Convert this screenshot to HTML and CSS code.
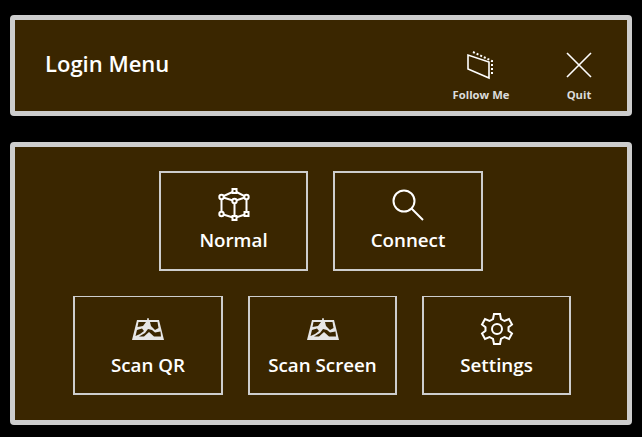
FILE: index.html
```html
<!DOCTYPE html>
<html lang="en">
<head>
  <meta charset="UTF-8" />
  <title>Login Menu</title>
  <link rel="stylesheet" href="styles.css">
</head>
<body>

  <header class="panel top-bar">
    <h1 class="title">Login Menu</h1>
    <div class="top-actions">
      <div class="top-action follow">
        <svg class="top-icon" width="32" height="32" viewBox="0 0 32 32">
          <path class="line" d="M3 5 L3 19 L24 28 L24 12 Z"/>
          <path class="dots" d="M8 2 L27 11 L27 26"/>
        </svg>
        <span class="top-label">Follow Me</span>
      </div>
      <div class="top-action quit">
        <svg class="top-icon" width="32" height="32" viewBox="0 0 32 32">
          <path class="line" d="M4 3 L28 27 M28 3 L4 27"/>
        </svg>
        <span class="top-label">Quit</span>
      </div>
    </div>
  </header>

  <main class="panel menu">
    <div class="menu-row">
      <button class="menu-btn" type="button">
        <svg class="menu-icon" width="34" height="34" viewBox="0 0 34 34">
          <path class="line thick" d="M17.5 3 L29.5 9 L29.5 26 L17.5 30 L4.5 26 L4.5 9 Z M4.5 9 L17.5 13 L29.5 9 M17.5 13 L17.5 30"/>
          <g class="nodes">
            <rect x="15.5" y="1" width="4" height="4"/>
            <circle cx="4.5" cy="9" r="2.2"/>
            <circle cx="29.5" cy="9" r="2.2"/>
            <circle cx="17.5" cy="13" r="2.2"/>
            <circle cx="4.5" cy="26" r="2.2"/>
            <rect x="27.5" y="24" width="4" height="4"/>
            <rect x="15.5" y="28" width="4" height="4"/>
          </g>
        </svg>
        <span>Normal</span>
      </button>
      <button class="menu-btn wide" type="button">
        <svg class="menu-icon" width="34" height="34" viewBox="0 0 34 34">
          <circle class="line thick" cx="13" cy="13" r="10.5"/>
          <path class="line thick" d="M20.5 20.5 L32 32"/>
        </svg>
        <span>Connect</span>
      </button>
    </div>
    <div class="menu-row lower">
      <button class="menu-btn wide" type="button">
        <svg class="menu-icon" width="34" height="34" viewBox="0 0 34 34">
          <use href="#scan-icon"/>
        </svg>
        <span>Scan QR</span>
      </button>
      <button class="menu-btn" type="button">
        <svg class="menu-icon" width="34" height="34" viewBox="0 0 34 34">
          <use href="#scan-icon"/>
        </svg>
        <span>Scan Screen</span>
      </button>
      <button class="menu-btn" type="button">
        <svg class="menu-icon" width="34" height="34" viewBox="0 0 34 34">
          <circle class="line thick" cx="17" cy="17" r="5"/>
          <path class="line thick" d="M14 2 L20 2 L21 7 L24.5 9 L29 7 L32 12.5 L28.5 15.3 L28.5 18.7 L32 21.5 L29 27 L24.5 25 L21 27 L20 32 L14 32 L13 27 L9.5 25 L5 27 L2 21.5 L5.5 18.7 L5.5 15.3 L2 12.5 L5 7 L9.5 9 L13 7 Z"/>
        </svg>
        <span>Settings</span>
      </button>
    </div>
  </main>

  <svg class="defs" width="0" height="0">
    <symbol id="scan-icon" viewBox="0 0 34 34">
      <path class="scan-fill" d="M6 8 L16 8 L16.5 6 L17.5 6 L18 8 L28 8 L33 28 L1 28 Z"/>
      <path class="scan-cut" d="M7.5 10 L15 10 L12 14 L6.5 15 Z M19 10 L26.5 10 L27.5 16 L24 18 L20 14 Z M6 18 L11 16.5 L13 19 L9 22 L4.5 24 Z M14 21 L17 17 L21 18 L24 20.5 L29.5 19.5 L30 24.5 L23 24.5 L18 20 L13 24.5 L8 24.5 Z"/>
    </symbol>
  </svg>

</body>
</html>
```

FILE: styles.css
```css
/* Dark brown kiosk menu */
body {
  margin: 0;
  width: 642px;
  height: 437px;
  overflow: hidden;
  background-color: #000;
  color: #fff;
  font-family: "Open Sans", "Noto Sans", sans-serif;
  padding: 15px 10px 0;
  box-sizing: border-box;
}
.panel {
  background-color: #3a2600;
  border: 5px solid #cdcdcd;
  border-radius: 4px;
  box-sizing: border-box;
}
.top-bar {
  height: 101px;
  display: flex;
  align-items: flex-start;
  justify-content: space-between;
}
.title {
  margin: 28px 0 0 30px;
  font-size: 22px;
  line-height: 30px;
  font-weight: 600;
}
.top-actions {
  display: flex;
  margin: 30px 28px 0 0;
}
.top-action {
  display: flex;
  flex-direction: column;
  align-items: center;
}
.follow {
  width: 70px;
  margin-right: 43px;
}
.quit {
  width: 40px;
}
.top-icon {
  display: block;
}
.top-label {
  margin-top: 5px;
  font-size: 11.25px;
  line-height: 16px;
  font-weight: 700;
  color: #dcdcdc;
}
.menu {
  margin-top: 26px;
  height: 283px;
  padding-top: 24px;
  display: flex;
  flex-direction: column;
  gap: 25px;
}
.menu-row {
  display: flex;
  justify-content: center;
  gap: 25px;
}
.menu-row.lower {
  margin-left: 2px;
}
.menu-btn {
  width: 149px;
  height: 100px;
  padding: 15px 0 0;
  border: 2px solid #cdcdcd;
  background: none;
  color: #fff;
  font-family: inherit;
  font-size: 18.75px;
  font-weight: 600;
  line-height: 26px;
  display: flex;
  flex-direction: column;
  align-items: center;
  gap: 5px;
}
.menu-btn.wide {
  width: 150px;
}
.lower .menu-btn {
  height: 99px;
  border-top-width: 1px;
  gap: 6px;
}
.menu-icon {
  display: block;
}
.line {
  fill: none;
  stroke: #fff;
  stroke-width: 1.6;
}
.line.thick {
  stroke-width: 2;
}
.dots {
  fill: none;
  stroke: #fff;
  stroke-width: 2;
  stroke-dasharray: 2 2;
}
.nodes {
  fill: #3a2600;
  stroke: #fff;
  stroke-width: 2;
}
.scan-fill {
  fill: #e6e6e6;
}
.scan-cut {
  fill: #3a2600;
}
.defs {
  position: absolute;
}
```
